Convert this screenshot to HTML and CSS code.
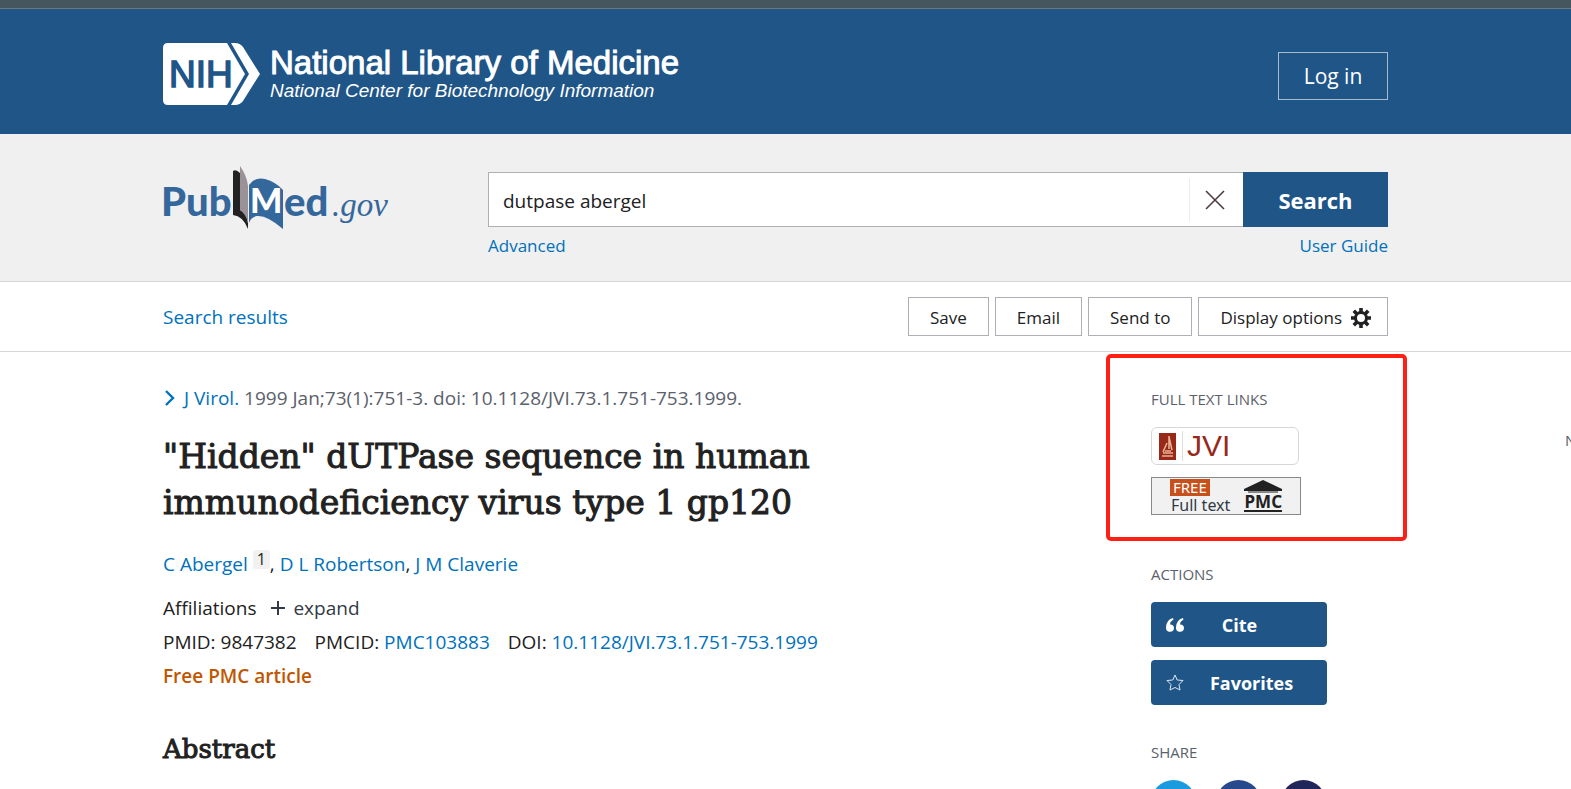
FILE: index.html
```html
<!DOCTYPE html>
<html lang="en">
<head>
<meta charset="utf-8">
<title>"Hidden" dUTPase sequence in human immunodeficiency virus type 1 gp120 - PubMed</title>
<link rel="stylesheet" href="styles.css">
</head>
<body>
<div class="page">
  <div class="top-strip"></div>
  <header class="nih-header wrap">
    <a class="nih-logo" href="#">
      <svg class="nih-mark" width="98" height="62" viewBox="0 0 98 62" aria-hidden="true">
        <path d="M5 0H64L82 31L64 62H5Q0 62 0 57V5Q0 0 5 0Z" fill="#fff"/>
        <path d="M68 0H72Q77 0 80 4L97 31L80 58Q77 62 72 62H68L86 31Z" fill="#fff"/>
        <text class="nih-word" x="6" y="44">NIH</text>
      </svg>
      <span class="nih-text">
        <span class="nih-name">National Library of Medicine</span>
        <span class="nih-sub">National Center for Biotechnology Information</span>
      </span>
    </a>
    <button class="login" type="button">Log in</button>
  </header>

  <section class="search-band wrap">
    <a class="pubmed-logo" href="#" aria-label="PubMed.gov">
      <svg width="228" height="64" viewBox="0 0 228 64" aria-hidden="true">
        <text class="pm-word" x="-2" y="50">Pub</text>
        <path d="M70 5Q73 3 77 7V44Q84 47 85 57V63Q80 50 70 49Z" fill="#222"/>
        <path d="M77 0Q84 10 85 20V57Q83 48 77 44Z" fill="#9a9296"/>
        <path d="M86 19Q91 11 102 13Q113 16 120 24V63Q104 49 94 50Q88 51 86 57Z" fill="#34679c"/>
        <text class="pm-m" x="87" y="47">M</text>
        <text class="pm-word" x="121" y="50">ed</text>
        <text class="pm-gov" x="169" y="50">.gov</text>
      </svg>
    </a>
    <form class="search-form">
      <div class="search-row">
        <div class="search-box">
          <input class="search-input" type="text" aria-label="Search PubMed" value="dutpase abergel">
          <button class="clear" type="button" aria-label="Clear search">
            <svg width="20" height="20" viewBox="0 0 20 20"><path d="M1 1L19 19M19 1L1 19" stroke="#4e3a42" stroke-width="1.6"/></svg>
          </button>
        </div>
        <button class="search-btn" type="button">Search</button>
      </div>
      <div class="search-links"><a href="#">Advanced</a><a href="#">User Guide</a></div>
    </form>
  </section>

  <nav class="toolbar wrap">
    <a class="results-link" href="#">Search results</a>
    <div class="tools">
      <button type="button">Save</button>
      <button type="button">Email</button>
      <button type="button">Send to</button>
      <button type="button" class="display">Display options
        <svg width="20" height="20" viewBox="-10 -10 20 20" aria-hidden="true">
          <circle r="5.5" fill="none" stroke="#212121" stroke-width="3"/>
          <path d="M0-6V-10M0 6V10M-6 0H-10M6 0H10M-4.3-4.3L-7.2-7.2M4.3 4.3L7.2 7.2M4.3-4.3L7.2-7.2M-4.3 4.3L-7.2 7.2" stroke="#212121" stroke-width="3.6"/>
        </svg>
      </button>
    </div>
  </nav>

  <div class="content wrap">
    <main class="article">
      <p class="citation"><svg width="12" height="16" viewBox="0 0 12 16" aria-hidden="true"><path d="M3 1L10 8L3 15" fill="none" stroke="#0071bc" stroke-width="2.4"/></svg><a href="#">J Virol.</a> 1999 Jan;73(1):751-3. doi: 10.1128/JVI.73.1.751-753.1999.</p>
      <h1>"Hidden" dUTPase sequence in human immunodeficiency virus type 1 gp120</h1>
      <p class="authors"><a href="#">C Abergel</a> <sup>1</sup>, <a href="#">D L Robertson</a>, <a href="#">J M Claverie</a></p>
      <p class="meta">Affiliations
        <button class="expand" type="button"><svg width="16" height="16" viewBox="0 0 16 16" aria-hidden="true"><path d="M8 1V15M1 8H15" stroke="#323a45" stroke-width="2"/></svg>expand</button></p>
      <p class="meta ids"><span>PMID: 9847382</span><span>PMCID: <a href="#">PMC103883</a></span><span>DOI: <a href="#">10.1128/JVI.73.1.751-753.1999</a></span></p>
      <p class="meta free">Free PMC article</p>
      <h2>Abstract</h2>
    </main>

    <aside class="side">
      <section class="links-block">
        <div class="highlight"></div>
        <h3>Full text links</h3>
        <a class="jvi" href="#">
          <svg width="18" height="27" viewBox="0 0 18 27" aria-hidden="true">
            <path d="M0 0H17V27H0Z" fill="#98281a"/>
            <path d="M10 3V16M10 4L13 17M8 10L4 19M4 20H14M6 18H12M3 23H14" fill="none" stroke="#e6b091" stroke-width="1.6"/>
          </svg>
          <span class="jvi-text">JVI</span>
        </a>
        <a class="pmc" href="#">
          <span class="pmc-free"><span class="pmc-tag">FREE</span><span class="pmc-full">Full text</span></span>
          <span class="pmc-mark">
            <svg width="38" height="13" viewBox="0 0 38 13" aria-hidden="true"><path d="M19 0L38 9V11H0V9Z" fill="#212121"/><path d="M4 12H34" stroke="#212121"/></svg>
            <span class="pmc-name">PMC</span>
          </span>
        </a>
      </section>
      <section class="actions-block">
        <h3>Actions</h3>
        <button class="action cite" type="button">
          <svg width="18" height="14" viewBox="0 0 18 14" aria-hidden="true"><path d="M7 0Q0 2 0 9.500A4 4 0 0 0 8 10A3.500 3.500 0 0 0 4 6.500Q4.500 3 7.500 1.500ZM17 0Q10 2 10 9.500A4 4 0 0 0 18 10A3.500 3.500 0 0 0 14 6.500Q14.500 3 17.500 1.500Z" fill="#fff"/></svg>
          <span>Cite</span>
        </button>
        <button class="action" type="button">
          <svg width="18" height="17" viewBox="0 0 18 17" aria-hidden="true"><path d="M9 1L11.200 6L17 6.500L13 10.500L14 16L9 13.500L4 16L5 10.500L1 6.500L6.800 6Z" fill="none" stroke="#dce8f3" stroke-linejoin="round"/></svg>
          <span>Favorites</span>
        </button>
      </section>
      <section class="share-block">
        <h3>Share</h3>
        <div class="share">
          <a class="dot twitter" href="#" aria-label="Twitter"></a>
          <a class="dot facebook" href="#" aria-label="Facebook"></a>
          <a class="dot permalink" href="#" aria-label="Permalink"></a>
        </div>
      </section>
    </aside>
    <a class="next" href="#">N</a>
  </div>
</div>
</body>
</html>
```
FILE: styles.css
```css
* { box-sizing: border-box; }
body { margin: 0; background: #fff; color: #212121; font-family: "Open Sans", "Noto Sans", sans-serif; font-size: 18px; line-height: 24px; }
.page { height: 100vh; overflow: hidden; }
a { color: #0071bc; text-decoration: none; }
button { font-family: inherit; margin: 0; cursor: pointer; }
h1, h2, h3, p { margin: 0; }
svg { display: block; flex: none; overflow: visible; }
.wrap { padding-left: 163px; padding-right: 183px; }

.top-strip { height: 9px; background: #46565f; border-bottom: 1px solid #6b7a80; }
.nih-header { height: 125px; background: #205588; display: flex; align-items: center; justify-content: space-between; }
.nih-logo { display: flex; align-items: center; gap: 9px; padding-top: 4px; color: #fff; font-family: "Liberation Sans", Arial, sans-serif; }
.nih-word { font: 37px "Liberation Sans", Arial, sans-serif; fill: #205588; stroke: #205588; stroke-width: 1.5px; }
.nih-text { display: flex; flex-direction: column; padding-top: 2px; }
.nih-name { font-size: 33px; line-height: 33px; -webkit-text-stroke: 1px #fff; }
.nih-sub { font-size: 19px; line-height: 24px; font-style: italic; }
.login { width: 110px; height: 48px; margin-top: 8px; border: 1px solid #a6bbcf; background: transparent; color: #fff; font-size: 21px; }

.search-band { display: flex; justify-content: space-between; height: 148px; padding-top: 32px; background: #f0f0f0; border-bottom: 1px solid #d6d7d9; }
.pm-word { font: 900 40px Lato, sans-serif; fill: #34679c; }
.pm-m { font: 900 34px Lato, sans-serif; fill: #fff; }
.pm-gov { font: italic 33px "Liberation Serif", serif; fill: #34679c; }
.search-form { flex: 0 1 900px; padding-top: 6px; }
.search-row { display: flex; height: 55px; }
.search-box { flex: 1; display: flex; background: #fff; border: 1px solid #aeb0b5; border-right: 0; }
.search-input { flex: 1; min-width: 0; border: 0; outline: 0; padding: 2px 14px 0; background: transparent; color: #212121; font: 19px "Open Sans", sans-serif; }
.clear { width: 54px; margin: 5px 0; padding: 0 10px 0 6px; display: grid; place-items: center; border: 0; border-left: 1px solid #ececec; background: transparent; }
.search-btn { width: 145px; border: 0; background: #205588; color: #fff; font-size: 22px; font-weight: 700; }
.search-links { display: flex; justify-content: space-between; margin-top: 7px; font-size: 17px; }

.toolbar { display: flex; align-items: center; justify-content: space-between; height: 70px; border-bottom: 1px solid #d6d7d9; }
.results-link { font-size: 19px; }
.tools { display: flex; gap: 6px; }
.tools button { display: flex; align-items: center; gap: 9px; height: 39px; padding: 2px 21px 0; border: 1px solid #aeb0b5; background: #fff; color: #212121; font-size: 17px; }
.tools .display { padding-right: 16px; }

.content { position: relative; display: flex; justify-content: space-between; gap: 32px; }
.article { flex: 0 1 720px; padding-top: 34px; }
.citation { display: flex; align-items: center; white-space: pre; color: #5b616b; font-size: 19px; }
.citation svg { margin-right: 9px; }
h1, h2 { font-family: "DejaVu Serif", serif; font-weight: 400; -webkit-text-stroke: 1px #212121; }
h1 { margin-top: 24px; font-size: 33px; line-height: 46px; }
.authors { margin-top: 24px; font-size: 19px; line-height: 26px; }
.authors sup { display: inline-block; padding: 0 4px; border-radius: 3px; background: #f1f1f1; font-size: 16px; line-height: 19px; vertical-align: 6px; }
.meta { font-size: 19px; line-height: 34px; }
.authors + .meta { display: flex; align-items: center; gap: 14px; margin-top: 14px; }
.expand { display: flex; align-items: center; gap: 7px; padding: 0; border: 0; background: none; color: #323a45; font-size: 19px; }
.ids { display: flex; gap: 18px; }
.free { color: #c05600; font-weight: 600; }
h2 { margin-top: 36px; font-size: 26px; line-height: 40px; }

.side { flex: none; width: 237px; padding-top: 35px; }
h3 { color: #5b616b; font-size: 15px; font-weight: 400; line-height: 24px; text-transform: uppercase; }
.links-block { position: relative; }
.highlight { position: absolute; left: -45px; right: -19px; top: -33px; height: 187px; border: 4px solid #ff2015; border-radius: 5px; pointer-events: none; }
.jvi { display: flex; align-items: center; gap: 5px; width: 148px; height: 38px; margin-top: 16px; padding-left: 7px; border: 1px solid #d6d7d9; border-radius: 6px; }
.jvi-text { padding-left: 4px; border-left: 1px solid #ddd; color: #98281a; font: 30px/30px "Liberation Sans", Arial, sans-serif; }
.pmc { display: flex; gap: 14px; width: 150px; height: 38px; margin-top: 12px; padding-left: 18px; border: 1px solid #85898d; background: #f1f1f1; color: #323a45; }
.pmc-free { display: flex; flex-direction: column; align-items: flex-start; padding-top: 1px; font: 16px/18px "Noto Sans", sans-serif; }
.pmc-tag { padding: 0 3px; background: #c8501a; color: #fff; font-size: 15px; line-height: 17px; }
.pmc-full { padding-left: 1px; }
.pmc-mark { padding-top: 2px; }
.pmc-name { display: block; height: 19px; border-bottom: 2px solid #212121; color: #212121; text-align: center; font: 700 17px/17px "Noto Sans", sans-serif; }
.actions-block { margin-top: 47px; }
.action { display: grid; grid-template-columns: 18px 1fr; align-items: center; gap: 8px; width: 176px; height: 45px; margin-top: 13px; padding: 0 16px 0 15px; border: 0; border-radius: 4px; background: #205588; color: #fff; font-size: 18px; font-weight: 700; }
.action.cite { margin-top: 16px; padding-right: 40px; }
.share-block { margin-top: 35px; }
.share { display: flex; gap: 20px; margin-top: 16px; }
.dot { width: 45px; height: 45px; border-radius: 50%; }
.twitter { background: #1a9be0; }
.facebook { background: #264a8c; }
.permalink { background: #20265a; }
.next { position: absolute; right: 0; top: 76px; width: 6px; overflow: hidden; color: #5b616b; font-size: 15px; }
```
